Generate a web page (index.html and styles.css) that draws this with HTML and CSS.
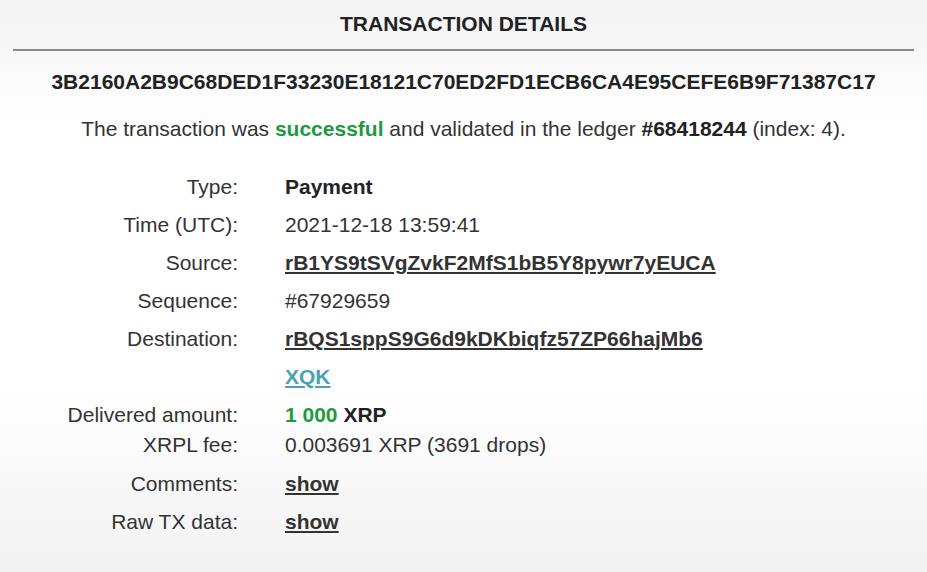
FILE: index.html
```html
<!DOCTYPE html>
<html lang="en">
    <head>
        <meta charset="UTF-8">
        <meta name="viewport" content="width=device-width, initial-scale=1.0">
        <title>Transaction details</title>
        <link rel="stylesheet" href="styles.css">
    </head>
    <body>
        <div class="page">
            <h1 class="title">TRANSACTION DETAILS</h1>
            <div class="hash">3B2160A2B9C68DED1F33230E18121C70ED2FD1ECB6CA4E95CEFE6B9F71387C17</div>
            <p class="status">The transaction was <b class="green">successful</b> and validated in the ledger <b>#68418244</b> (index: 4).</p>

            <div class="details">
                <div class="label">Type:</div>
                <div class="value"><b>Payment</b></div>

                <div class="label">Time (UTC):</div>
                <div class="value">2021-12-18 13:59:41</div>

                <div class="label">Source:</div>
                <div class="value"><a href="#" class="link">rB1YS9tSVgZvkF2MfS1bB5Y8pywr7yEUCA</a></div>

                <div class="label">Sequence:</div>
                <div class="value">#67929659</div>

                <div class="label">Destination:</div>
                <div class="value"><a href="#" class="link">rBQS1sppS9G6d9kDKbiqfz57ZP66hajMb6</a></div>

                <div class="label"></div>
                <div class="value"><a href="#" class="link teal">XQK</a></div>

                <div class="label">Delivered amount:</div>
                <div class="value"><b class="green">1 000</b> <b>XRP</b></div>

                <div class="label tight">XRPL fee:</div>
                <div class="value tight">0.003691 XRP (3691 drops)</div>

                <div class="label">Comments:</div>
                <div class="value"><a href="#" class="link">show</a></div>

                <div class="label">Raw TX data:</div>
                <div class="value"><a href="#" class="link">show</a></div>
            </div>
        </div>
    </body>
</html>
```

FILE: styles.css
```css
html {
    height: 100%;
}
body {
    font-family: "Liberation Sans", Arial, sans-serif;
    font-size: 21px;
    color: #333;
    margin: 0;
    min-height: 100%;
    background: linear-gradient(#f3f3f3, #fff 22%, #fff 68%, #f2f2f2);
}
b {
    color: #222;
}
.page {
    padding: 0 13px;
}
.title {
    margin: 0;
    padding: 12px 0 13px;
    font-size: 21px;
    line-height: 24px;
    text-align: center;
    color: #222;
    border-bottom: 2px solid #8a8a8a;
}
.hash {
    margin-top: 19px;
    line-height: 24px;
    font-weight: bold;
    text-align: center;
    color: #222;
}
.status {
    margin: 23px 0 0;
    line-height: 24px;
    text-align: center;
}
.green {
    color: #1f9a40;
}
.details {
    display: grid;
    grid-template-columns: 225px auto;
    column-gap: 47px;
    row-gap: 14px;
    margin-top: 34px;
    line-height: 24px;
}
.label {
    text-align: right;
}
.tight {
    margin-top: -8px;
    margin-bottom: 1px;
}
.link {
    color: #333;
    font-weight: bold;
    text-decoration: underline;
    text-decoration-thickness: 2px;
    text-underline-offset: 2px;
}
.teal {
    color: #4aa2b4;
}
```
